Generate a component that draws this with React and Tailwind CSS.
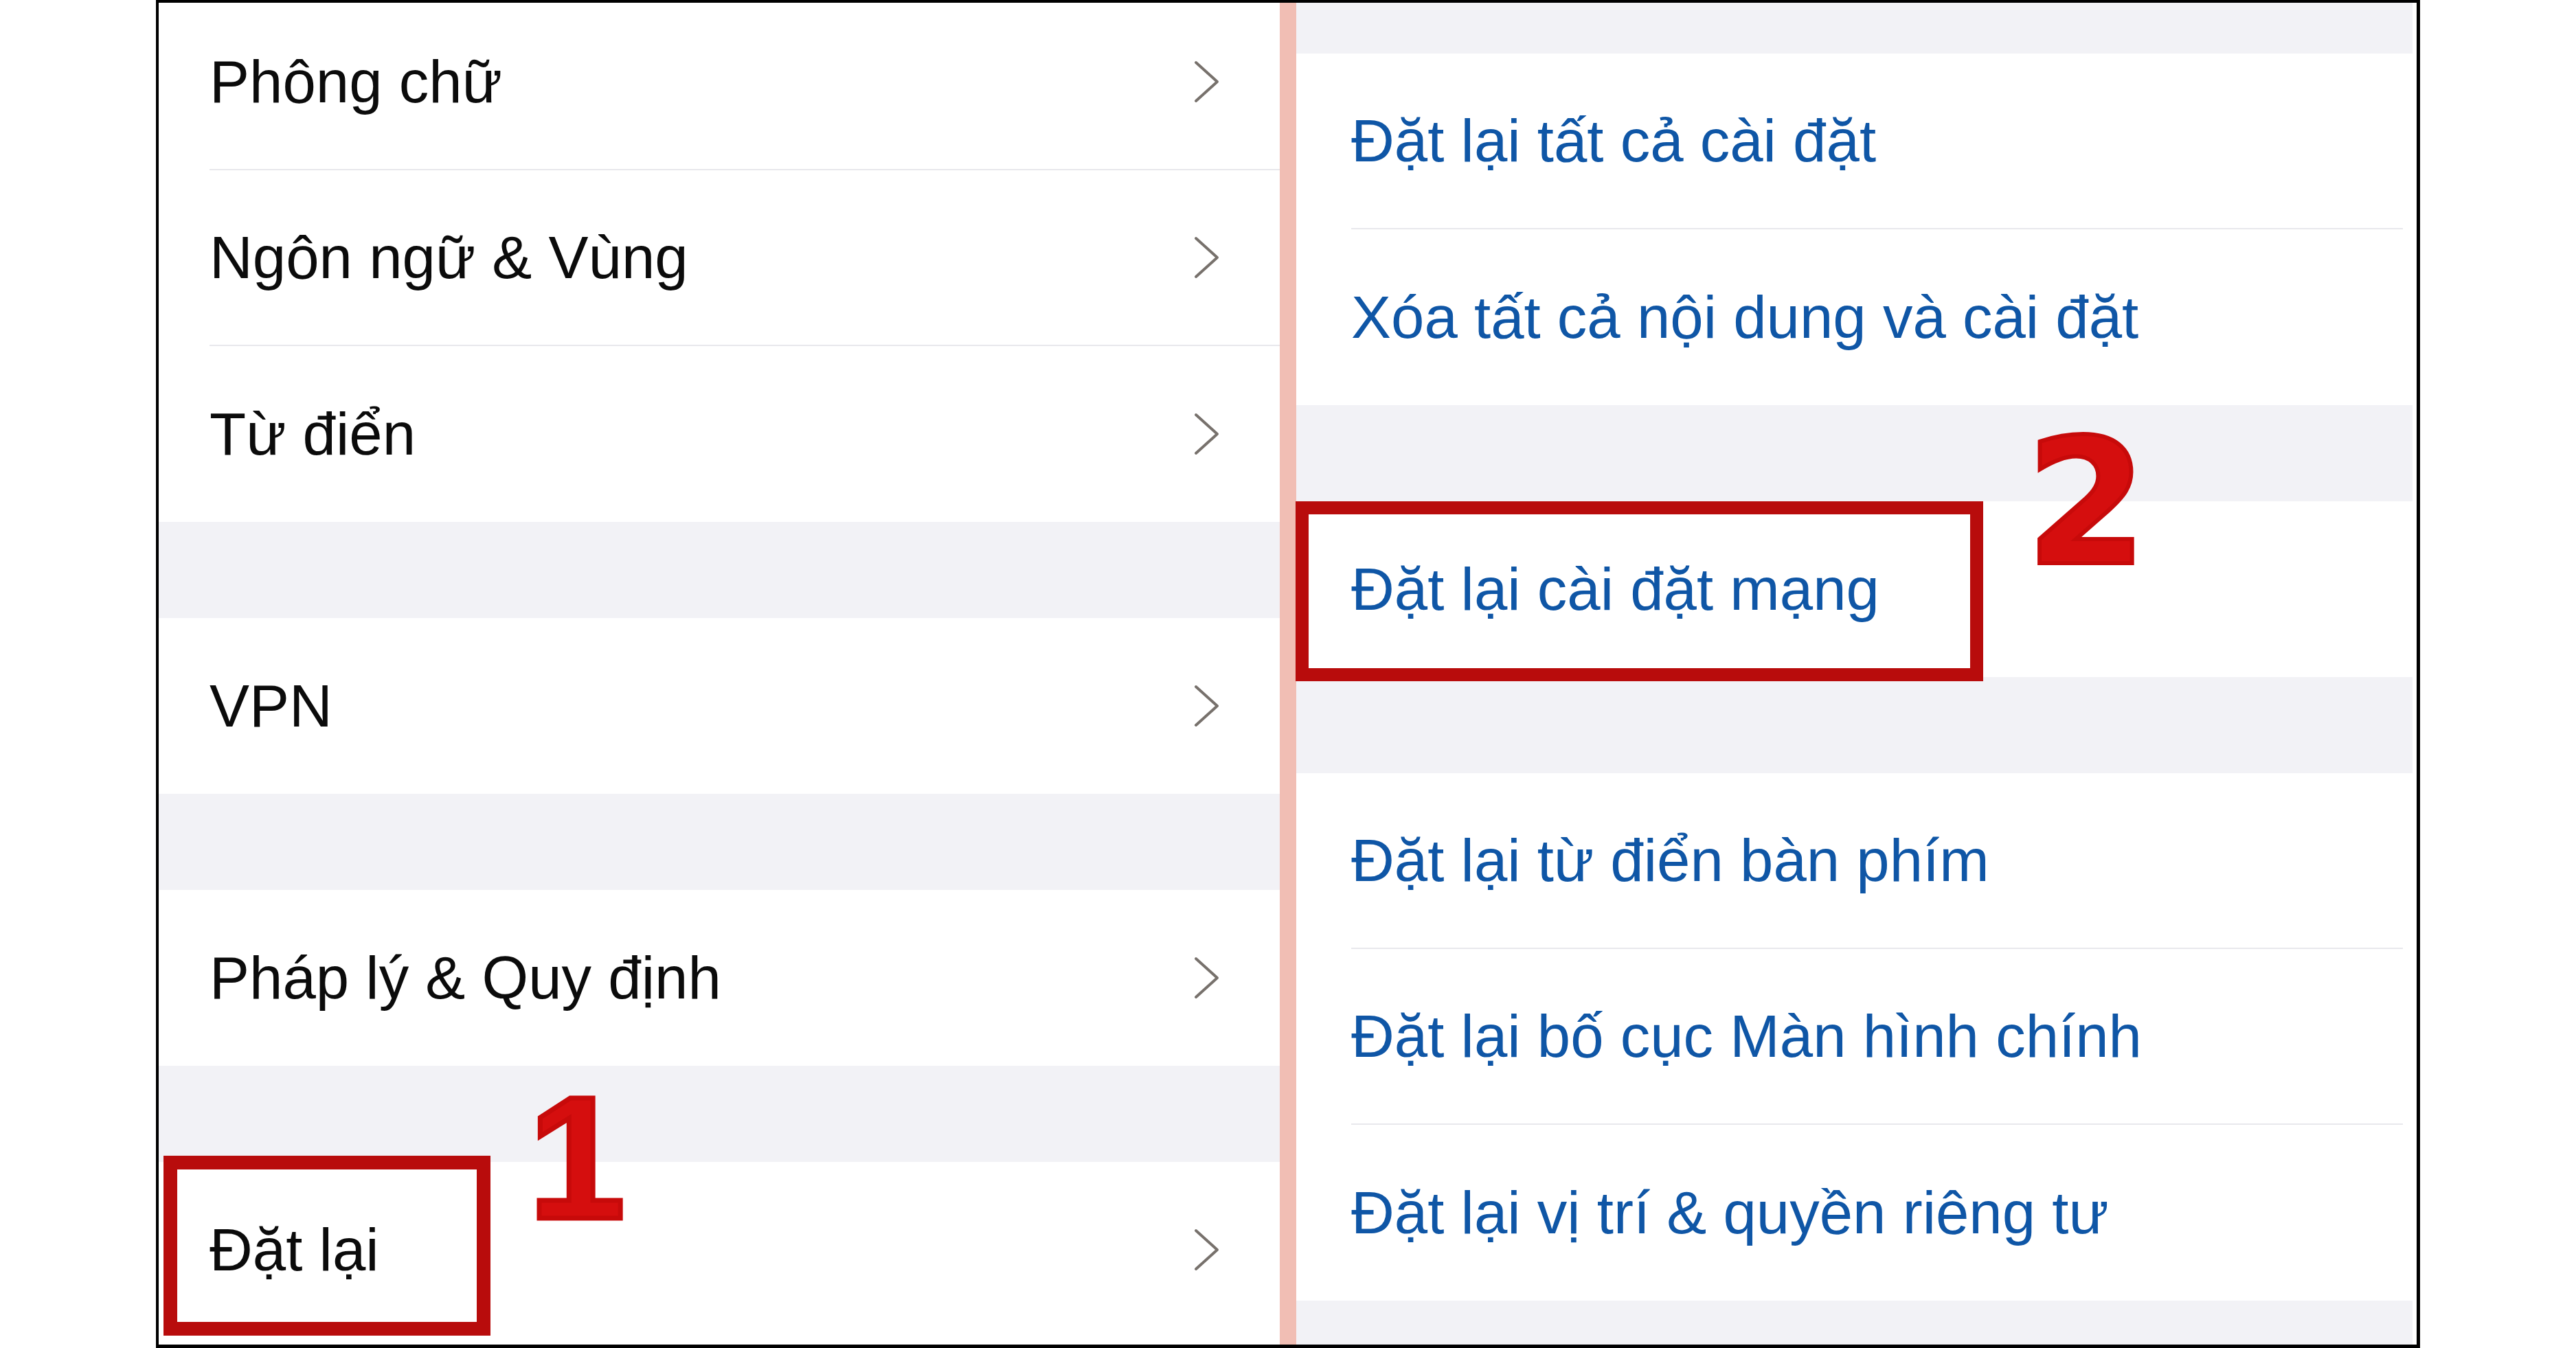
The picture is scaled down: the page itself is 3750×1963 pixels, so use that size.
import React from 'react';

// iOS "Cài đặt chung" screenshot with red callouts
const leftItems = [
  { kind: 'row', label: 'Phông chữ', sep: true },
  { kind: 'row', label: 'Ngôn ngữ & Vùng', sep: true },
  { kind: 'row', label: 'Từ điển' },
  { kind: 'gap' },
  { kind: 'row', label: 'VPN' },
  { kind: 'gap' },
  { kind: 'row', label: 'Pháp lý & Quy định' },
  { kind: 'gap' },
  { kind: 'row', label: 'Đặt lại' },
];

const rightItems = [
  { kind: 'top' },
  { kind: 'row', label: 'Đặt lại tất cả cài đặt', sep: true },
  { kind: 'row', label: 'Xóa tất cả nội dung và cài đặt' },
  { kind: 'gap' },
  { kind: 'row', label: 'Đặt lại cài đặt mạng' },
  { kind: 'gap' },
  { kind: 'row', label: 'Đặt lại từ điển bàn phím', sep: true },
  { kind: 'row', label: 'Đặt lại bố cục Màn hình chính', sep: true },
  { kind: 'row', label: 'Đặt lại vị trí & quyền riêng tư' },
  { kind: 'end' },
];

function Chevron() {
  return (
    <svg width="38" height="62" viewBox="0 0 38 62" fill="none">
      <path d="M3 3L34 31L3 59" stroke="#77716c" strokeWidth="4" strokeLinecap="round" strokeLinejoin="round" />
    </svg>
  );
}

function LeftRow({ label, sep }) {
  return (
    <div className="h-[256px] shrink-0 flex pl-[74px] bg-white">
      <div
        className={
          sep
            ? 'flex-1 flex items-center justify-between pr-[87px] border-b-2 border-[#e8e8ec]'
            : 'flex-1 flex items-center justify-between pr-[87px]'
        }
      >
        <span className="text-[87px] leading-[1.15] text-[#0b0b0b]">{label}</span>
        <Chevron />
      </div>
    </div>
  );
}

function RightRow({ label, sep }) {
  return (
    <div className="h-[256px] shrink-0 flex pl-[80px] bg-white">
      <div
        className={
          sep
            ? 'flex-1 flex items-center mr-[14px] border-b-2 border-[#e8e8ec]'
            : 'flex-1 flex items-center mr-[14px]'
        }
      >
        <span className="text-[87px] leading-[1.15] text-[#0f56a6]">{label}</span>
      </div>
    </div>
  );
}

export default function App() {
  return (
    <div className="w-[3750px] h-[1963px] bg-white font-['Liberation_Sans',Arial,sans-serif]">
      <div className="relative mx-auto w-[3296px] h-[1963px] border-t-4 border-l-4 border-r-[5px] border-b-[5px] border-black overflow-hidden flex">
        {/* left column */}
        <div className="w-[1632px] shrink-0 flex flex-col bg-white">
          <div className="flex flex-col mt-[-12px]">
            {leftItems.map((item, i) =>
              item.kind === 'gap' ? (
                <div key={i} className="h-[140px] shrink-0 bg-[#f2f2f6]" />
              ) : (
                <LeftRow key={i} label={item.label} sep={item.sep} />
              )
            )}
          </div>
        </div>

        {/* divider */}
        <div className="w-[24px] shrink-0 bg-[#f1beb4]" />

        {/* right column */}
        <div className="flex-1 flex flex-col bg-white pr-[6px]">
          {rightItems.map((item, i) => {
            if (item.kind === 'top') return <div key={i} className="h-[74px] shrink-0 bg-[#f2f2f6]" />;
            if (item.kind === 'gap') return <div key={i} className="h-[140px] shrink-0 bg-[#f2f2f6]" />;
            if (item.kind === 'end') return <div key={i} className="flex-1 bg-[#f2f2f6]" />;
            return <RightRow key={i} label={item.label} sep={item.sep} />;
          })}
        </div>

        {/* callouts */}
        <div className="absolute left-[7px] top-[1679px] w-[476px] h-[262px] border-[20px] border-[#b80c0c]" />
        <div className="absolute left-[1655px] top-[726px] w-[1001px] h-[262px] border-[19px] border-[#b80c0c]" />
        <span className="absolute left-[538px] top-[1555px] text-[254px] leading-none font-bold text-[#d50e0e] [-webkit-text-stroke:7px_#c70a0a]">
          1
        </span>
        <span className="absolute left-[2718px] top-[601px] text-[254px] leading-none font-bold text-[#d50e0e] font-['DejaVu_Sans',sans-serif] [-webkit-text-stroke:6px_#c70a0a]">
          2
        </span>
      </div>
    </div>
  );
}
